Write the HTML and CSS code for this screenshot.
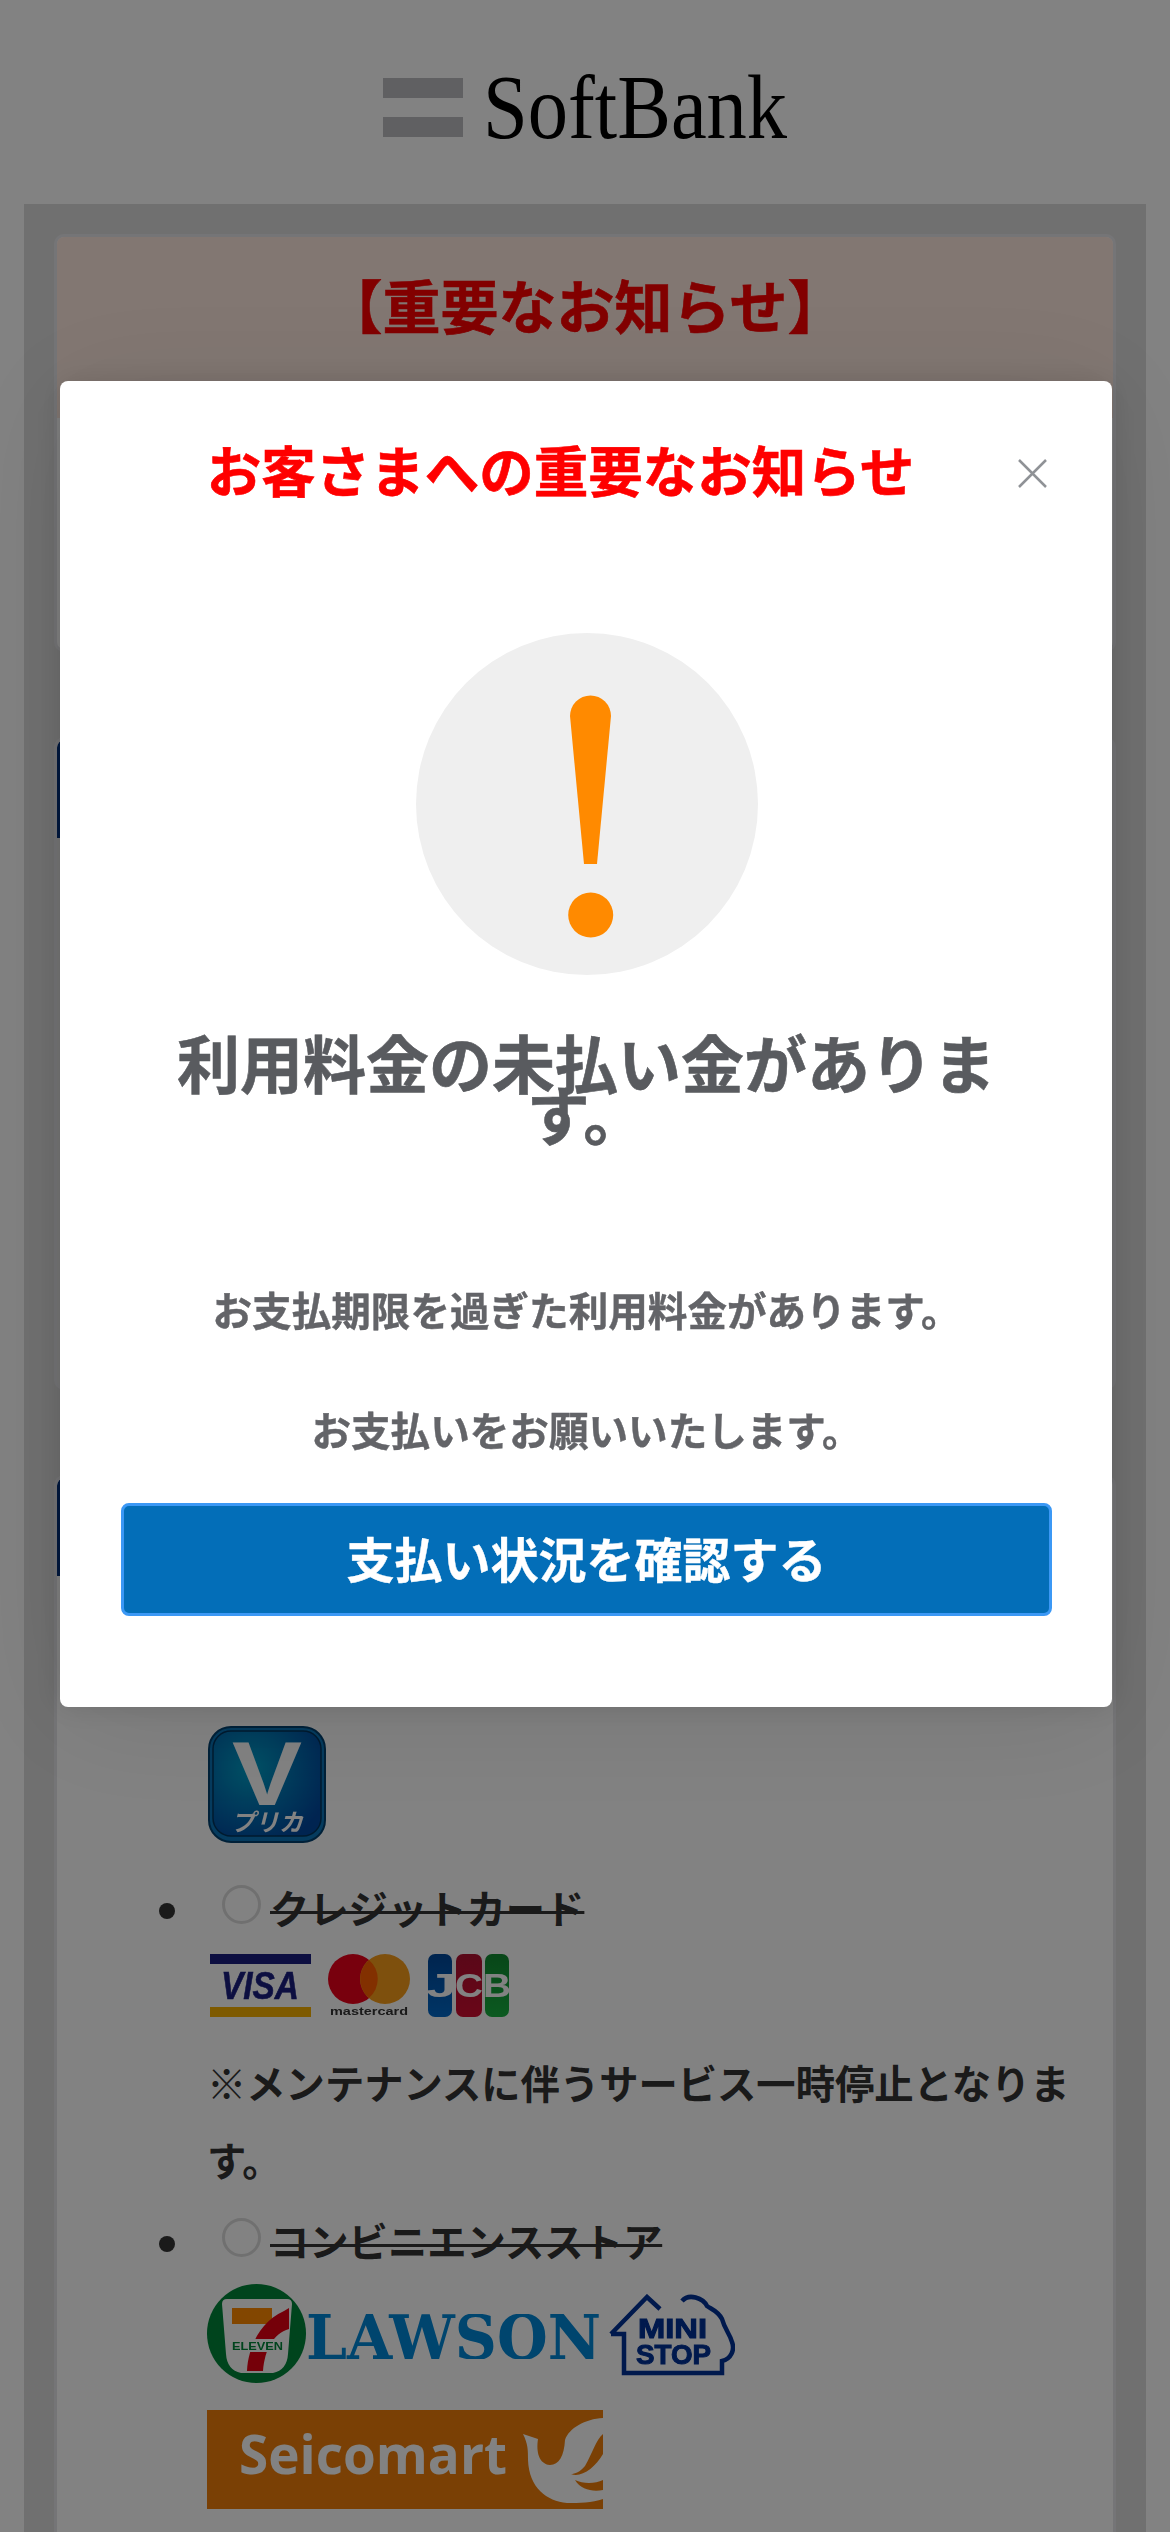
FILE: index.html
```html
<!DOCTYPE html>
<html lang="ja">
<head>
<meta charset="utf-8">
<title>SoftBank</title>
<link rel="stylesheet" href="styles.css">
</head>
<body>
<div class="page">
  <header class="site-head">
    <div class="brand">
      <div class="brand-bars"><span></span><span></span></div>
      <div class="brand-name"><span>SoftBank</span></div>
    </div>
  </header>
  <main class="sheet">
    <section class="card card-notice">
      <h1 class="notice-title">【重要なお知らせ】</h1>
    </section>
    <section class="card card-muted">
      <div class="card-bar"></div>
    </section>
    <section class="card card-pay">
      <div class="card-bar"></div>
      <ul class="pay-list">
        <li>
          <div class="choice"></div>
          <svg class="logo logo-v" width="118" height="117" viewBox="0 0 118 117">
            <defs>
              <radialGradient id="vg" cx="35%" cy="35%" r="75%">
                <stop offset="0" stop-color="#00a0c8"/>
                <stop offset="1" stop-color="#0048a0"/>
              </radialGradient>
            </defs>
            <rect x="1" y="1" width="116" height="115" rx="22" fill="#0a74b8" stroke="#00406e" stroke-width="2"/>
            <rect x="5" y="5" width="108" height="105" rx="18" fill="url(#vg)" stroke="#00345c" stroke-width="1.5"/>
            <text class="v-mark" x="24" y="79" textLength="70" lengthAdjust="spacingAndGlyphs">V</text>
            <text class="v-sub" x="23" y="105" textLength="72" lengthAdjust="spacingAndGlyphs">プリカ</text>
          </svg>
        </li>
        <li>
          <div class="choice"><input class="radio" type="radio" disabled><s class="choice-name">クレジットカード</s></div>
          <div class="brands brands-card">
            <svg class="logo" width="101" height="63" viewBox="0 0 101 63">
              <rect x="0" y="0" width="101" height="10" fill="#1a1f80"/>
              <rect x="0" y="53" width="101" height="10" fill="#f7b000"/>
              <text class="visa" x="11" y="45" textLength="78" lengthAdjust="spacingAndGlyphs">VISA</text>
            </svg>
            <svg class="logo" width="82" height="63" viewBox="0 0 82 63">
              <circle cx="25" cy="25" r="25" fill="#eb001b"/>
              <circle cx="57" cy="25" r="25" fill="#f79e1b"/>
              <path d="M41 6a25 25 0 0 1 0 38a25 25 0 0 1 0-38z" fill="#ff5f00"/>
              <text class="mc" x="2" y="61" textLength="78" lengthAdjust="spacingAndGlyphs">mastercard</text>
            </svg>
            <svg class="logo" width="82" height="63" viewBox="0 0 82 63">
              <defs>
                <linearGradient id="jb" x1="0" x2="0" y1="0" y2="1"><stop offset="0" stop-color="#00489a"/><stop offset="1" stop-color="#0068c8"/></linearGradient>
                <linearGradient id="jr" x1="0" x2="0" y1="0" y2="1"><stop offset="0" stop-color="#b01030"/><stop offset="1" stop-color="#d00c30"/></linearGradient>
                <linearGradient id="jg" x1="0" x2="0" y1="0" y2="1"><stop offset="0" stop-color="#108a30"/><stop offset="1" stop-color="#18b040"/></linearGradient>
              </defs>
              <rect x="1" y="0" width="24" height="63" rx="7" fill="url(#jb)"/>
              <rect x="29" y="0" width="26" height="63" rx="7" fill="url(#jr)"/>
              <rect x="58" y="0" width="24" height="63" rx="7" fill="url(#jg)"/>
              <text class="jcb" x="14" y="43" text-anchor="middle" textLength="30" lengthAdjust="spacingAndGlyphs">J</text>
              <text class="jcb" x="42" y="43" text-anchor="middle" textLength="28" lengthAdjust="spacingAndGlyphs">C</text>
              <text class="jcb" x="70" y="43" text-anchor="middle" textLength="28" lengthAdjust="spacingAndGlyphs">B</text>
            </svg>
          </div>
          <p class="pay-note">※メンテナンスに伴うサービス一時停止となります。</p>
        </li>
        <li>
          <div class="choice"><input class="radio" type="radio" disabled><s class="choice-name">コンビニエンスストア</s></div>
          <div class="brands brands-store">
            <svg class="logo" width="99" height="99" viewBox="0 0 99 99">
              <circle cx="49.5" cy="49.5" r="49.5" fill="#00853a"/>
              <path d="M20 15H80Q85 15 85 20L81 70Q80 86 66 89H34Q20 86 19 70L15 20Q15 15 20 15Z" fill="#fff"/>
              <rect x="25" y="24" width="40" height="16" fill="#ff8a00"/>
              <path d="M82 24V45C66 50 58 65 56 87H40C41 65 52 38 77 27Z" fill="#e60012"/>
              <rect x="24" y="55" width="53" height="13" fill="#fff"/>
              <text class="eleven" x="25" y="66" textLength="51" lengthAdjust="spacingAndGlyphs">ELEVEN</text>
            </svg>
            <svg class="logo logo-lawson" width="295" height="45" viewBox="0 0 295 45">
              <text class="lawson" x="0" y="45" textLength="295" lengthAdjust="spacingAndGlyphs">LAWSON</text>
            </svg>
            <svg class="logo logo-ministop" width="126" height="82" viewBox="0 0 126 82">
              <path d="M2 40L38 3L51 15M2 40H15V79H113V67C122 65 126 56 123 48C121 40 116 36 113 25C109 17 102 15 98 12C94 4 80 -1 73 7" fill="none" stroke="#003298" stroke-width="4.5"/>
              <text class="mini" x="29" y="44" textLength="69" lengthAdjust="spacingAndGlyphs">MINI</text>
              <text class="mini" x="27" y="70" textLength="75" lengthAdjust="spacingAndGlyphs">STOP</text>
            </svg>
          </div>
          <svg class="logo logo-seico" width="396" height="99" viewBox="0 0 396 99">
            <rect width="396" height="99" fill="#ef7f0a"/>
            <text class="seico" x="32" y="64" textLength="268" lengthAdjust="spacingAndGlyphs">Seicomart</text>
            <path d="M316 24L331 29C329 42 332 54 343 55C352 55 357 46 358 30C362 18 378 9 396 8V89C385 93 372 93 360 93C340 91 322 78 321 50C321 40 321 34 316 24Z" fill="#fff"/>
            <path d="M396 24C389 30 385 44 378 56C373 62 368 64 364 64C374 68 388 58 396 44ZM396 70C388 74 376 74 368 70C374 80 386 82 396 80Z" fill="#ef7f0a"/>
          </svg>
        </li>
      </ul>
    </section>
  </main>
</div>

<div class="overlay">
  <div class="modal" role="dialog">
    <div class="modal-head">
      <h2 class="modal-title">お客さまへの重要なお知らせ</h2>
      <svg class="modal-close" width="29" height="29" viewBox="0 0 29 29">
        <path d="M1 1L28 28M28 1L1 28" fill="none" stroke="#8f9296" stroke-width="2.5"/>
      </svg>
    </div>
    <svg class="alert" width="342" height="342" viewBox="0 0 342 342">
      <circle cx="171" cy="171" r="171" fill="#efefef"/>
      <path d="M154 83a20.500 20.500 0 0 1 41 0L181 231H168Z" fill="#ff8a00"/>
      <circle cx="174.700" cy="282" r="22.500" fill="#ff8a00"/>
    </svg>
    <h3 class="alert-title">利用料金の未払い金があります。</h3>
    <p class="alert-text alert-text-first">お支払期限を過ぎた利用料金があります。</p>
    <p class="alert-text">お支払いをお願いいたします。</p>
    <button class="action" type="button">支払い状況を確認する</button>
  </div>
</div>
</body>
</html>
```

FILE: styles.css
```css
* { box-sizing: border-box; }
html, body { margin: 0; padding: 0; }
body {
  background: #fff;
  color: #333;
  font-family: "Liberation Sans", "Noto Sans CJK JP", sans-serif;
}
.page {
  height: 2532px;
  overflow: hidden;
}

/* site header */
.site-head {
  height: 204px;
  display: flex;
  justify-content: center;
  padding-top: 78px;
}
.brand {
  display: flex;
  gap: 20px;
  height: 59px;
}
.brand-bars {
  width: 80px;
  display: flex;
  flex-direction: column;
  justify-content: space-between;
}
.brand-bars span {
  display: block;
  height: 20px;
  background: #bcbdc1;
}
.brand-name {
  width: 305px;
  height: 59px;
  font-family: "Liberation Serif", serif;
  font-size: 92px;
  line-height: 59px;
  color: #000;
}
.brand-name span {
  display: inline-block;
  transform: scaleX(0.875);
  transform-origin: left center;
  white-space: nowrap;
}

/* sheet + cards */
.sheet {
  margin: 0 24px;
  padding: 30px 30px 0;
  background: #dcdcdc;
  display: flex;
  flex-direction: column;
  gap: 85px;
  min-height: 2328px;
}
.card {
  background: #fff;
  border: 3px solid #e6e6ea;
  border-radius: 10px;
  overflow: hidden;
}
.card-notice { height: 418px; }
.card-muted { height: 653px; background: #e8e8e8; }
.card-pay { padding-bottom: 60px; border-radius: 10px 10px 0 0; }
.card-bar {
  height: 98px;
  margin-right: 30px;
  background: #002f7a;
  border-radius: 8px 8px 0 0;
}
.notice-title {
  margin: 0;
  padding: 3px 0 40px;
  text-align: center;
  font-size: 58px;
  line-height: 138px;
  font-weight: 700;
  -webkit-text-stroke: 0.6px #ff0000;
  color: #ff0000;
  background: #ffeae0;
}

/* payment list */
.pay-list {
  margin: 0;
  padding: 25px 23px 0 150px;
  font-size: 39.3px;
  line-height: 77px;
  font-weight: 700;
  list-style: none;
}
.pay-list li + li { margin-top: 4px; }
.pay-list li:nth-child(2) { margin-top: 29px; }
.choice {
  display: flex;
  align-items: center;
  height: 77px;
}
.choice::before {
  content: "";
  flex: none;
  width: 16px;
  height: 16px;
  margin: 0 32px 0 -48px;
  border-radius: 50%;
  background: #333;
}
.radio {
  appearance: none;
  flex: none;
  width: 39px;
  height: 39px;
  margin: 0 9px 12px 15px;
  border: 3px solid #dcdcdc;
  border-radius: 50%;
  background: #fff;
}
.choice-name {
  text-decoration: line-through;
  text-decoration-thickness: 3px;
}
.brands {
  display: flex;
  align-items: flex-start;
}
.brands-card {
  margin: 5px 0 0 3px;
  gap: 17px;
}
.brands-store {
  margin-top: 2px;
  height: 99px;
}
.pay-note {
  margin: 30px 0 0;
}
.logo {
  display: block;
  filter: blur(0.6px);
  flex: none;
}
.logo-v { margin: 48px 0 0 1px; }
.logo-lawson { margin-top: 30px; }
.logo-ministop { margin: 10px 0 0 8px; }
.logo-seico { margin-top: 27px; }

.v-mark { font: 700 90px "Liberation Sans", sans-serif; fill: #fff; }
.v-sub { font: 700 24px "Noto Sans CJK JP", sans-serif; font-style: italic; fill: #fff; }
.visa { font: italic 700 39px "Liberation Sans", sans-serif; fill: #1a1f80; stroke: #1a1f80; stroke-width: 0.6; }
.mc { font: 700 11px "Liberation Sans", sans-serif; fill: #333; }
.jcb { font: 700 34px "Liberation Sans", sans-serif; fill: #fff; }
.eleven { font: 700 11px "Liberation Sans", sans-serif; fill: #00853a; }
.lawson { font: 700 62px "DejaVu Serif", serif; fill: #0088d8; }
.mini { font: 700 27px "Liberation Sans", sans-serif; fill: #003298; stroke: #003298; stroke-width: 1; }
.seico { font: 700 53px "Open Sans", sans-serif; fill: #fff; }

/* modal */
.overlay {
  position: fixed;
  inset: 0;
  background: rgba(0, 0, 0, 0.49);
  padding: 381px 0 0 60px;
}
.modal {
  width: 1052px;
  height: 1326px;
  padding: 63px 60px 0 61px;
  background: #fff;
  border-radius: 8px;
  box-shadow: 0 0 30px rgba(0, 0, 0, 0.12), 0 10px 120px rgba(0, 0, 0, 0.1);
  display: flex;
  flex-direction: column;
  align-items: center;
}
.modal-head {
  width: 100%;
  height: 60px;
  display: flex;
  align-items: center;
  gap: 18px;
}
.modal-title {
  flex: 1;
  margin: 0;
  text-align: center;
  font-size: 54.5px;
  line-height: 60px;
  font-weight: 700;
  -webkit-text-stroke: 0.6px #ff0000;
  color: #ff0000;
}
.modal-close {
  flex: none;
  margin: 0 5px 2px 0;
}
.alert {
  display: block;
  flex: none;
  margin-top: 129px;
}
.alert-title {
  margin: 65px 0 0;
  width: 100%;
  text-align: center;
  font-size: 63px;
  line-height: 52px;
  font-weight: 700;
  -webkit-text-stroke: 0.6px #595b5f;
  color: #595b5f;
}
.alert-text {
  margin: 61px 0 0;
  width: 100%;
  text-align: center;
  font-size: 39.6px;
  line-height: 59px;
  font-weight: 700;
  -webkit-text-stroke: 0.4px #636468;
  color: #636468;
}
.alert-text-first { margin-top: 139px; }
.action {
  flex: none;
  width: 100%;
  height: 113px;
  margin-top: 41px;
  border: 3px solid #3b98f5;
  border-radius: 8px;
  background: #036eb8;
  color: #fff;
  font-family: inherit;
  font-size: 48px;
  font-weight: 700;
  -webkit-text-stroke: 0.4px #fff;
  padding: 0 0 6px;
}
```
